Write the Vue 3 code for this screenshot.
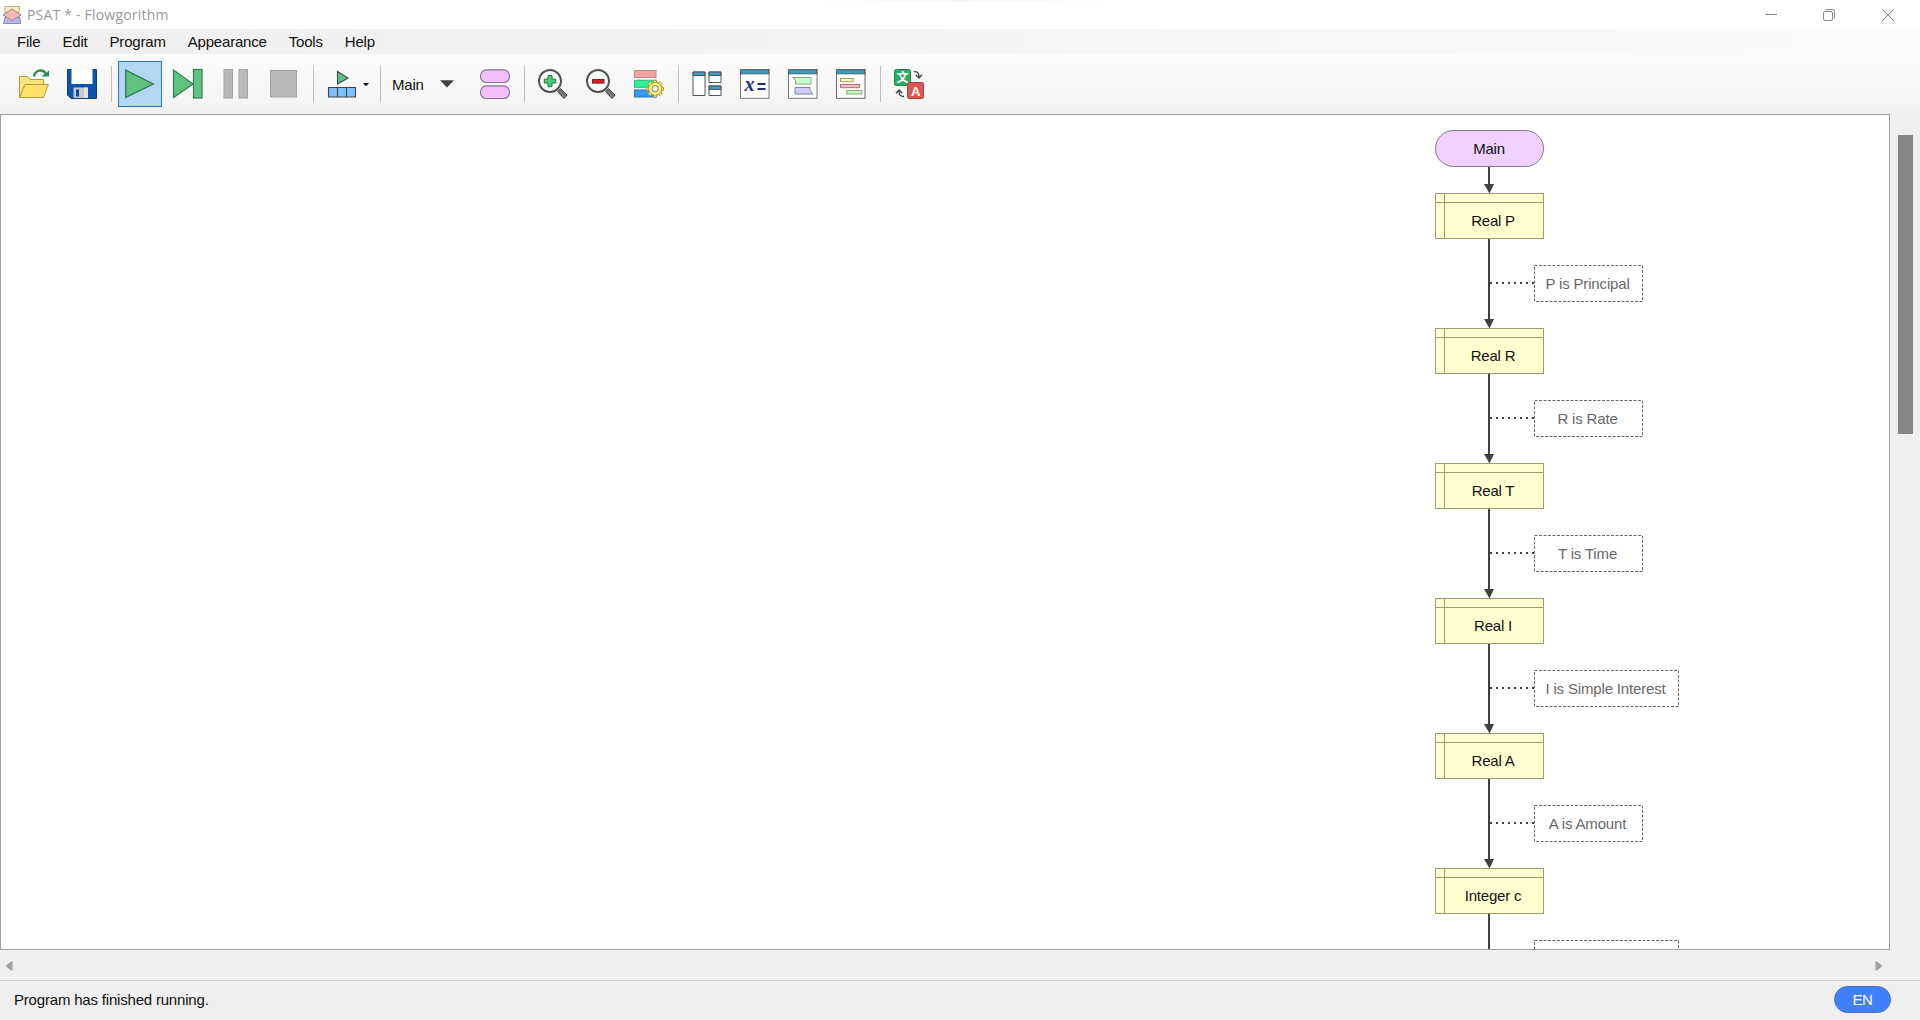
<script setup>
const menus = ['File', 'Edit', 'Program', 'Appearance', 'Tools', 'Help']

const steps = [
  { label: 'Real P', note: 'P is Principal', width: 108 },
  { label: 'Real R', note: 'R is Rate', width: 108 },
  { label: 'Real T', note: 'T is Time', width: 108 },
  { label: 'Real I', note: 'I is Simple Interest', width: 144 },
  { label: 'Real A', note: 'A is Amount', width: 108 },
  { label: 'Integer c', note: '', width: 144 },
].map((s, i) => ({ ...s, y: 193 + i * 135 }))

const gearTeeth = [0, 45, 90, 135, 180, 225, 270, 315]
</script>

<template>
  <div class="window">
    <header class="titlebar">
      <svg class="logo" width="20" height="20" viewBox="0 0 20 20">
        <path d="M3 1.500H18L16.500 8H3Z" fill="#f4edc0" stroke="#b9ae86" />
        <path d="M3 12.500H18L18.500 18.500H1.500Z" fill="#b9b4ee" stroke="#8d88c0" />
        <path d="M10 4L19 10L10 15.500L1 10Z" fill="#f6b9b9" stroke="#b08080" />
      </svg>
      <span class="title">PSAT * - Flowgorithm</span>
      <div class="controls">
        <svg width="14" height="14" viewBox="0 0 14 14"><path d="M1 6.500H13" /></svg>
        <svg width="14" height="14" viewBox="0 0 14 14">
          <rect x="1.500" y="3.500" width="9" height="9" rx="1.500" />
          <path d="M3.500 1.500H10.500A2 2 0 0 1 12.500 3.500V10.500" />
        </svg>
        <svg width="14" height="14" viewBox="0 0 14 14"><path d="M1 1L13 13M13 1L1 13" /></svg>
      </div>
    </header>

    <nav class="menubar"><span v-for="m in menus" :key="m">{{ m }}</span></nav>

    <div class="toolbar">
      <div class="tool">
        <svg viewBox="0 0 32 32">
          <path d="M1.500 29.500V8.500H9.500L12 11.500H25.500V17H7Z" fill="#fbe67e" stroke="#b49a3c" />
          <path d="M7 16.500H30.300L25.500 29.500H1.500Z" fill="#ffe066" stroke="#b49a3c" />
          <path d="M16 8.500C17 1.500 26 0.500 28 6.500" fill="none" stroke="#2a9050" stroke-width="2.400" />
          <path d="M23.500 8.500H31V2.500Z" fill="#2a9050" />
        </svg>
      </div>
      <div class="tool">
        <svg viewBox="0 0 32 32">
          <path d="M1.500 1.500H30.500V30.500H5L1.500 27Z" fill="#0b55ad" stroke="#0a3f86" />
          <rect x="5.500" y="1" width="21" height="15" fill="#fff" />
          <rect x="7.500" y="19.500" width="14" height="10.500" fill="#c9c9c9" />
          <rect x="10" y="21.500" width="3" height="7" fill="#0b4a99" />
          <rect x="18" y="19.500" width="4" height="10.500" fill="#e2e2d8" />
        </svg>
      </div>
      <i class="sep"></i>
      <div class="tool active">
        <svg viewBox="0 0 32 32"><path d="M1.700 2.200L29.300 16L1.700 29.400Z" fill="#61c17f" stroke="#2f7f4c" stroke-width="1.300" /></svg>
      </div>
      <div class="tool">
        <svg viewBox="0 0 32 32" fill="#61c17f" stroke="#2f8550" stroke-width="1.200">
          <path d="M1.500 2L21 16L1.500 29.500Z" /><rect x="21.500" y="1.500" width="8.500" height="28.500" />
        </svg>
      </div>
      <div class="tool">
        <svg viewBox="0 0 32 32" fill="#b8b8b8" stroke="#a3a3a3">
          <rect x="4" y="1.500" width="8.500" height="28.500" /><rect x="19" y="1.500" width="8.500" height="28.500" />
        </svg>
      </div>
      <div class="tool">
        <svg viewBox="0 0 32 32"><rect x="2.500" y="2.500" width="26" height="26.500" fill="#b8b8b8" stroke="#a3a3a3" /></svg>
      </div>
      <i class="sep"></i>
      <div class="tool">
        <svg viewBox="0 0 32 32" stroke="#444" stroke-width="1.100">
          <path d="M11.500 3.500L22 10L11.500 16Z" fill="#55c584" />
          <path d="M2.500 19.500H29.500V29H2.500Z" fill="#7cc0ff" /><path d="M11.500 19.500V29M20.500 19.500V29" />
        </svg>
      </div>
      <svg class="mini-caret" viewBox="0 0 6 4"><path d="M0 0H6L3 3.300Z" /></svg>
      <i class="sep"></i>
      <div class="function-select">
        <span>Main</span>
        <svg width="14" height="8" viewBox="0 0 14 8"><path d="M0 0.300H14L7 7.500Z" fill="#444" /></svg>
      </div>
      <div class="tool">
        <svg viewBox="0 0 32 32" fill="#f2bfff" stroke="#8c7696" stroke-width="1.200">
          <rect x="1.500" y="1.800" width="29" height="12.700" rx="6" /><rect x="1.500" y="17.800" width="29" height="12.700" rx="6" />
        </svg>
      </div>
      <i class="sep"></i>
      <div v-for="mode in ['in', 'out']" :key="mode" class="tool">
        <svg viewBox="0 0 32 32">
          <path d="M20.500 23.500L23.500 20.500L30 27L27 30.500Z" fill="#777" stroke="#444" />
          <circle cx="13" cy="13" r="11" fill="#fcfcfc" stroke="#505050" stroke-width="1.900" />
          <path v-if="mode === 'in'" d="M11 7.500H15V11.200H18.800V15H15V18.700H11V15H7.200V11.200H11Z" fill="#50c878" stroke="#237a40" />
          <rect v-else x="7.500" y="11.500" width="11.500" height="3.600" fill="#d32222" stroke="#7e2020" />
        </svg>
      </div>
      <div class="tool">
        <svg viewBox="0 0 32 32">
          <rect x="1.500" y="2.500" width="21.500" height="7" fill="#f3a2a2" stroke="#c88585" />
          <rect x="1.500" y="12.300" width="21.500" height="7" fill="#2df09a" stroke="#32b87c" />
          <rect x="1.500" y="22" width="21.500" height="7" fill="#3399f4" stroke="#2c74bc" />
          <g fill="#fff176" stroke="#9c8b35" stroke-width=".9">
            <rect v-for="a in gearTeeth" :key="a" x="20.300" y="12.300" width="3.600" height="5" rx=".6" :transform="`rotate(${a} 22.100 20.700)`" />
            <circle cx="22.100" cy="20.700" r="6.400" />
          </g>
          <circle cx="22.100" cy="20.700" r="5.700" fill="#fff176" />
          <circle cx="22.100" cy="20.700" r="3" fill="#fff" stroke="#9a9a80" stroke-width="1.200" />
        </svg>
      </div>
      <i class="sep"></i>
      <div class="tool">
        <svg viewBox="0 0 32 32" stroke="#555" fill="#fff">
          <path d="M2 4H14V27.500H2ZM18 4H30V14.500H18ZM18 18H30V27.500H18Z" />
          <path d="M2 4H14V7.500H2ZM18 4H30V7.500H18ZM18 18H30V21.500H18Z" fill="#3d9fbd" />
        </svg>
      </div>
      <div class="tool">
        <svg viewBox="0 0 32 32">
          <rect x="1.500" y="1.800" width="28.500" height="28.500" fill="#fff" stroke="#777" />
          <rect x="1.500" y="1.800" width="28.500" height="4" fill="#3d9fbd" stroke="#43616b" />
          <text class="formula" x="5.500" y="23">x</text>
          <path d="M18.500 16H26.500M18.500 21H26.500" stroke="#12347a" stroke-width="2" />
        </svg>
      </div>
      <div class="tool">
        <svg viewBox="0 0 32 32">
          <rect x="1.500" y="1.800" width="28.500" height="28.500" fill="#fff" stroke="#777" />
          <rect x="1.500" y="1.800" width="28.500" height="4" fill="#3d9fbd" stroke="#43616b" />
          <path d="M5.500 9.500H24V16H8.500V12.500Z" fill="#c9ffcd" stroke="#86aa88" />
          <path d="M8 19.500H23V22.500L26 26H8Z" fill="#d0d0ff" stroke="#8080aa" />
        </svg>
      </div>
      <div class="tool">
        <svg viewBox="0 0 32 32">
          <rect x="1.500" y="1.800" width="28.500" height="28.500" fill="#fff" stroke="#666" />
          <rect x="1.500" y="1.800" width="28.500" height="4" fill="#3d9fbd" stroke="#43616b" />
          <rect x="5.500" y="10.500" width="12.500" height="3.200" fill="#fff7b5" stroke="#a59c6c" />
          <rect x="5.500" y="16.500" width="19" height="3.200" fill="#ffbcbc" stroke="#aa7070" />
          <rect x="11.800" y="22.500" width="15" height="3.500" fill="#c8ffbd" stroke="#7da574" />
        </svg>
      </div>
      <i class="sep"></i>
      <div class="tool">
        <svg viewBox="0 0 32 32">
          <rect x="1.500" y="1.500" width="16" height="16" rx="1.800" fill="#27ae60" stroke="#278048" />
          <text class="glyph cjk" x="9.500" y="14">文</text>
          <rect x="14.500" y="14.500" width="16" height="16" rx="1.800" fill="#e05656" stroke="#9e4545" />
          <text class="glyph" x="22.500" y="27.500">A</text>
          <g fill="none" stroke="#484848" stroke-width="1.400">
            <path d="M21 3.500C25 3.500 26 5 26 9.500M22.700 6.700L26 10L29 6.700" />
            <path d="M11 28.500C7 28.500 6 27 6 22.500M3 25.200L6 22L9.300 25.200" />
          </g>
        </svg>
      </div>
    </div>

    <main class="workspace">
      <section class="canvas">
        <svg width="1888" height="834" viewBox="1 115 1888 834">
          <rect x="1435.500" y="130.500" width="108" height="36" rx="18" fill="#efd0ff" stroke="#8a7398" />
          <text x="1489" y="154">Main</text>
          <path class="flow" d="M1489 167V186" />
          <path class="tip" d="M1484 184H1494L1489.500 193.500Z" />
          <g v-for="s in steps" :key="s.label" :transform="`translate(0 ${s.y})`">
            <rect x="1435.500" y=".5" width="108" height="45" fill="#ffffd0" stroke="#9c9c70" />
            <path d="M1435 9.500H1543M1444.500 0V45" stroke="#9c9c70" />
            <text x="1493" y="33">{{ s.label }}</text>
            <path class="flow" d="M1489 46V128" />
            <path class="tip" d="M1484 126H1494L1489.500 135.500Z" />
            <path class="dots" d="M1490 90H1534" />
            <rect class="note" x="1534.500" y="72.500" :width="s.width" height="36" />
            <text class="note-text" :x="1534.5 + s.width / 2 - 1" y="96">{{ s.note }}</text>
          </g>
        </svg>
      </section>
      <aside class="vscroll"><div class="thumb"></div></aside>
    </main>

    <div class="hscroll">
      <svg width="8" height="10" viewBox="0 0 8 10"><path d="M7.500 .5V9.500H6L.5 5L6 .5Z" /></svg>
      <svg width="8" height="10" viewBox="0 0 8 10"><path d="M.5 .5V9.500H2L7.500 5L2 .5Z" /></svg>
    </div>

    <footer class="status">
      <span>Program has finished running.</span>
      <span class="lang">EN</span>
    </footer>
  </div>
</template>

<style>
body { margin: 0; overflow: hidden; }
</style>

<style scoped>
.window {
  width: 1920px;
  height: 1020px;
  display: flex;
  flex-direction: column;
  background: #efefef;
  color: #111;
  font: 15px "Liberation Sans", Arial, sans-serif;
  letter-spacing: -.19px;
}
.titlebar {
  height: 29px;
  flex: none;
  display: flex;
  align-items: center;
  background: radial-gradient(ellipse 140px 3px at 962px 0, #f4f4f4, #fff);
  color: #999;
}
.logo { margin-left: 2px; }
.title { margin-left: 5px; font: 14px "Open Sans", sans-serif; letter-spacing: .2px; }
.controls { margin-left: auto; margin-right: 25px; display: flex; }
.controls svg { fill: none; stroke: #888; stroke-width: 1; margin-left: 44px; }
.controls svg:last-child { margin-left: 45px; }
.menubar {
  height: 25px;
  flex: none;
  display: flex;
  align-items: center;
  gap: 22px;
  padding-left: 17px;
  background: linear-gradient(90deg, #efefef, #f3f3f3 40%, #fcfcfc);
}
.toolbar {
  height: 60px;
  flex: none;
  display: flex;
  align-items: center;
  padding-left: 10px;
  background: linear-gradient(#fcfcfc, #f7f7f7 50%, #f5f5f5 80%, #f0f0f0);
}
.tool { width: 48px; height: 48px; flex: none; display: flex; align-items: center; justify-content: center; }
.tool svg { width: 32px; height: 32px; }
.tool.active {
  box-sizing: border-box;
  width: 44px;
  height: 46px;
  margin: 0 2px;
  background: #b3d7f3;
  border: 1px solid #2676bd;
}
.sep { width: 1px; height: 36px; margin: 0 4px 0 5px; background: #bdbdbd; }
.mini-caret { width: 6px; height: 4px; margin: 0 11px 0 -3px; transform: translateY(1px); }
.mini-caret + .sep { margin-left: 0; }
.function-select { width: 79px; margin-left: 7px; display: flex; align-items: center; }
.function-select span { width: 48px; }
.formula { font: italic bold 20px "Liberation Serif", serif; fill: #12347a; }
.glyph { font: bold 13px "Liberation Sans", sans-serif; fill: #fff; text-anchor: middle; }
.glyph.cjk { font: bold 12px "Noto Sans CJK SC", sans-serif; }
.workspace { height: 836px; flex: none; display: flex; }
.canvas {
  box-sizing: border-box;
  width: 1890px;
  height: 836px;
  overflow: hidden;
  background: #fff;
  border: 1px solid #a0a0a0;
}
.canvas svg { display: block; }
.canvas text { text-anchor: middle; fill: #111; font-size: 15px; letter-spacing: -.22px; }
.canvas .note-text { fill: #686868; letter-spacing: -.16px; }
.flow { stroke: #404040; stroke-width: 2; }
.tip { fill: #404040; }
.dots { stroke: #404040; stroke-width: 2; stroke-dasharray: 2 4; }
.note { fill: #fff; stroke: #686868; stroke-dasharray: 3 1.500; }
.vscroll { flex: 1; padding: 21px 0 0 8px; }
.thumb { width: 15px; height: 299px; background: #868686; }
.hscroll {
  box-sizing: border-box;
  height: 31px;
  flex: none;
  display: flex;
  justify-content: space-between;
  align-items: center;
  padding: 1px 37px 0 5px;
  border-bottom: 1px solid #d2d2d2;
}
.hscroll svg { fill: #a0a0a0; }
.status { flex: 1; display: flex; align-items: center; justify-content: space-between; padding: 0 29px 2px 14px; }
.lang {
  box-sizing: border-box;
  width: 57px;
  height: 27px;
  border: 1px solid #4a70b8;
  border-radius: 14px;
  background: #4080ff;
  color: #fff;
  text-align: center;
  line-height: 25px;
  letter-spacing: -.5px;
}
</style>
